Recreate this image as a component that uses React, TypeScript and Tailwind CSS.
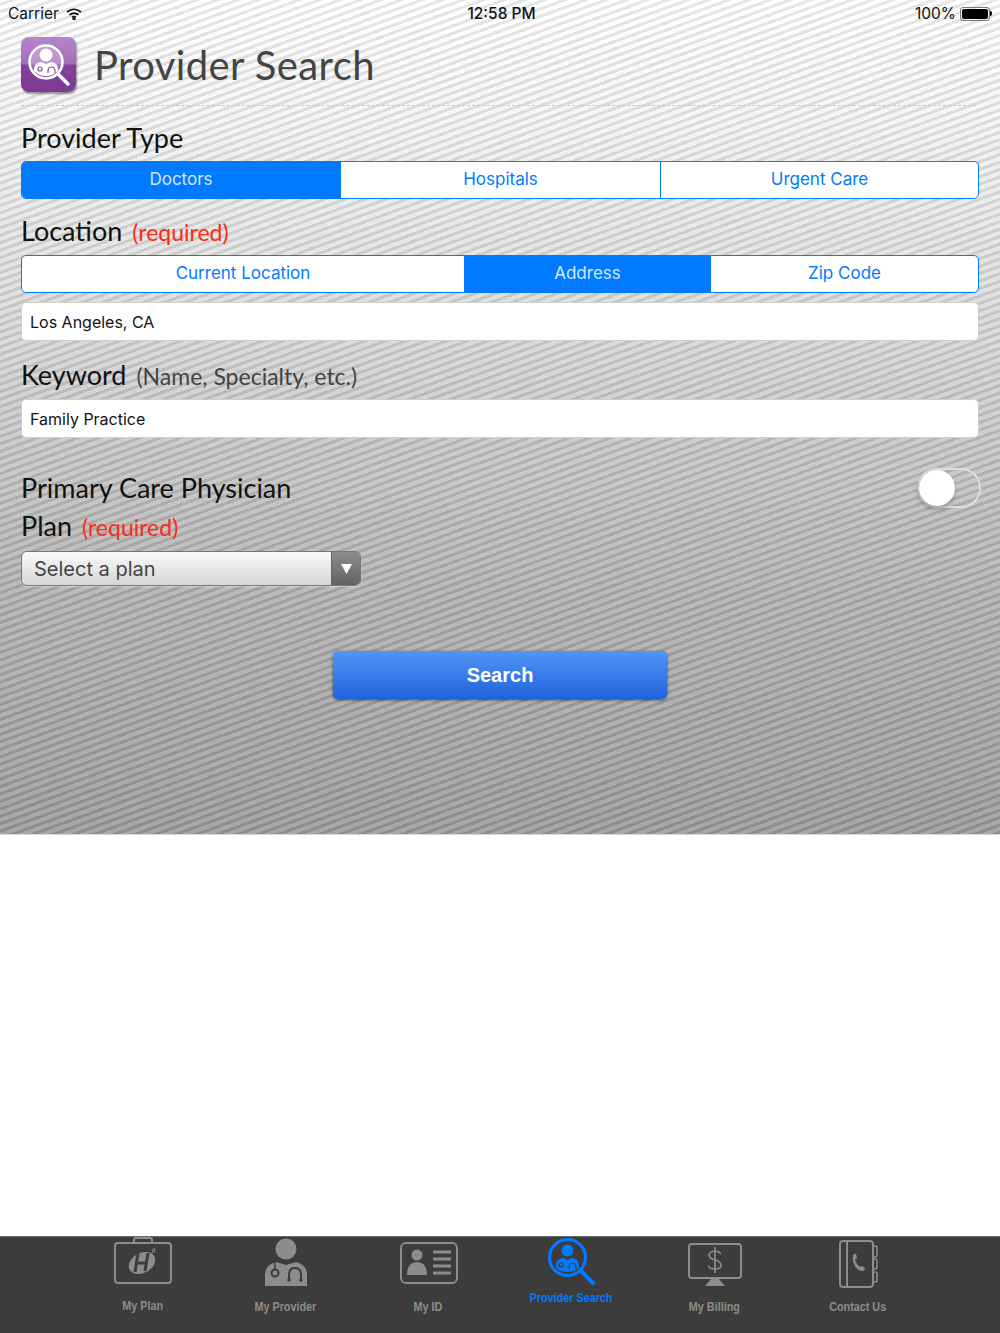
import { ReactNode } from 'react'

const lato = "font-['Lato','Noto_Sans',sans-serif]"

function Segmented({ items, active, cols }: { items: string[]; active: number; cols: string }) {
  return (
    <div className={`grid ${cols} h-[38px] rounded-[5px] border border-[#007aff] overflow-hidden bg-white`}>
      {items.map((item, i) => (
        <div
          key={item}
          className={`flex items-center justify-center text-[17px] ${i > 0 ? 'border-l border-[#007aff]' : ''} ${
            i === active ? 'bg-[#007aff] text-[#d5e8ff]' : 'text-[#007aff]'
          }`}
        >
          {item}
        </div>
      ))}
    </div>
  )
}

function Label({ title, note, red }: { title: string; note: string; red?: boolean }) {
  return (
    <div className={`flex items-baseline gap-[10px] ${lato}`}>
      <span className="text-[27px] leading-[34px] text-[#111]">{title}</span>
      <span className={`text-[23px] leading-[34px] ${red ? 'text-[#ff2a12]' : 'text-[#444]'}`}>{note}</span>
    </div>
  )
}

function TextBox({ value }: { value: string }) {
  return (
    <div className="h-[39px] rounded-[5px] border border-[#cfcfcf] bg-white pl-[8px] flex items-center text-[16px] text-[#111]">
      {value}
    </div>
  )
}

function PlanIcon() {
  return (
    <svg width="60" height="50" viewBox="0 0 60 50" fill="none" stroke="#8c8c8c" strokeWidth="2">
      <path d="M21 7V4q0-2 2-2h14q2 0 2 2v3" />
      <rect x="2" y="7" width="56" height="40" rx="3" />
      <ellipse cx="29" cy="27" rx="14" ry="10" transform="rotate(-28 29 27)" fill="#8c8c8c" stroke="none" />
      <path d="M25 18l-3 18M35 17l-3 18M23 27h11" stroke="#3c3c3c" strokeWidth="3" />
      <path d="M39 17l1-4q2-1 2 1l-1 3" strokeWidth="1" />
    </svg>
  )
}

function DoctorIcon() {
  return (
    <svg width="44" height="50" viewBox="0 0 44 50" fill="none">
      <circle cx="22" cy="12" r="10.5" fill="#8c8c8c" />
      <path d="M1 49V38q0-10 11-13l10 3 10-3q11 3 11 13v11z" fill="#8c8c8c" />
      <path d="M11 25v7" stroke="#3c3c3c" strokeWidth="1.5" />
      <circle cx="11" cy="36" r="3.5" stroke="#3c3c3c" strokeWidth="2" />
      <path d="M25 43v-5q0-7 6-7t6 7v5" stroke="#3c3c3c" strokeWidth="2" />
      <circle cx="25" cy="43" r="1.8" fill="#3c3c3c" />
      <circle cx="37" cy="43" r="1.8" fill="#3c3c3c" />
    </svg>
  )
}

function IdIcon() {
  return (
    <svg width="58" height="42" viewBox="0 0 58 42" fill="none">
      <rect x="1" y="1" width="56" height="40" rx="5" stroke="#8c8c8c" strokeWidth="2" />
      <circle cx="17" cy="13" r="5.5" fill="#8c8c8c" />
      <path d="M7 33q0-13 10-13t10 13z" fill="#8c8c8c" />
      <path d="M33 10h18M33 17h18M33 24h18M33 31h18" stroke="#8c8c8c" strokeWidth="3" />
    </svg>
  )
}

function SearchDoctorIcon() {
  return (
    <svg width="48" height="48" viewBox="0 0 48 48" fill="none">
      <circle cx="19.5" cy="19.5" r="18" stroke="#007aff" strokeWidth="3.2" />
      <path d="M33 33l12 12" stroke="#007aff" strokeWidth="4" strokeLinecap="round" />
      <circle cx="19.5" cy="12.5" r="6" fill="#007aff" />
      <path d="M8 30v-3q0-6 7-7l4.500 2 4.500-2q7 1 7 7v3q-5 4-11.500 4T8 30z" fill="#007aff" />
      <circle cx="13" cy="27" r="2" stroke="#3c3c3c" strokeWidth="1.200" />
      <path d="M21 31v-2q0-4 3.500-4t3.500 4v2" stroke="#3c3c3c" strokeWidth="1.200" />
    </svg>
  )
}

function BillingIcon() {
  return (
    <svg width="54" height="44" viewBox="0 0 54 44" fill="none">
      <rect x="1" y="1" width="52" height="34" rx="3" stroke="#8c8c8c" strokeWidth="2" />
      <path d="M17 43l6-7h8l6 7z" fill="#8c8c8c" />
      <path d="M33 11q-2-3-6-3t-6 3.500q0 4 6 5.500t6 5.500q0 3.500-6 3.500t-6.500-3.500M27 4v26" stroke="#8c8c8c" strokeWidth="1.700" />
    </svg>
  )
}

function ContactIcon() {
  return (
    <svg width="40" height="48" viewBox="0 0 40 48" fill="none" stroke="#8c8c8c" strokeWidth="2">
      <rect x="2" y="1" width="33" height="46" rx="3" />
      <path d="M9 1v46" />
      <path d="M35 6h2q2 0 2 2v7q0 2-2 2h-2M35 19h2q2 0 2 2v6q0 2-2 2h-2M35 32h2q2 0 2 2v6q0 2-2 2h-2" strokeWidth="1.500" />
      <path
        d="M15 15q2-2 3-1l1 4-2 2q1 4 5 7l2-1 3 2q0 3-3 3-4 0-7-5-3-5-2-11z"
        fill="#8c8c8c"
        stroke="none"
      />
    </svg>
  )
}

function Tab({ icon, label, active, top }: { icon: ReactNode; label: string; active?: boolean; top: string }) {
  return (
    <div className="flex flex-col items-center">
      <div className={`h-[52px] flex items-start justify-center ${top}`}>{icon}</div>
      <div
        className={`text-center text-[12px] leading-[13px] font-bold scale-x-[0.9] font-['Liberation_Sans',sans-serif] ${
          active ? 'text-[#007aff] mt-[3px]' : 'text-[#8c8c8c] mt-[12px]'
        }`}
      >
        {label}
      </div>
    </div>
  )
}

export default function App() {
  return (
    <div className="w-[1000px] h-[1333px] flex flex-col bg-white font-['Inter','Roboto',sans-serif] overflow-hidden">
      {/* Main panel */}
      <div className="relative h-[835px] border-b border-[#d8d8d8] bg-[linear-gradient(180deg,#ffffff_0%,#f3f3f3_15%,#d8d8d8_40%,#b4b4b4_70%,#9d9d9d_100%)]">
        <div className="absolute inset-0 opacity-[0.1] bg-[repeating-linear-gradient(-20deg,#000_0px,#000_3px,#fff_3px,#fff_7px)]" />
        <div className="relative">
          {/* Status bar */}
          <div className="h-[27px] px-[8px] grid grid-cols-3 items-center text-[15.500px] text-[#111]">
            <div className="flex items-center gap-[7px]">
              <span>Carrier</span>
              <svg width="16" height="12" viewBox="0 0 16 12" fill="none" stroke="#111" strokeWidth="1.700">
                <path d="M1 4q7-5.500 14 0M3.500 6.800q4.500-3.500 9 0M6 9.300q2-1.500 4 0" />
                <circle cx="8" cy="10.800" r="0.800" fill="#111" />
              </svg>
            </div>
            <div className="text-center font-medium ml-[3px]">12:58 PM</div>
            <div className="flex items-center justify-end gap-[4px]">
              <span>100%</span>
              <div className="flex items-center">
                <div className="w-[30px] h-[14px] rounded-[3px] border border-[#777] p-[1px]">
                  <div className="w-full h-full rounded-[2px] bg-black" />
                </div>
                <div className="w-[2px] h-[5px] rounded-r-[2px] bg-black" />
              </div>
            </div>
          </div>

          <div className="px-[21px]">
            {/* Header */}
            <div className="flex items-center gap-[18px] h-[79px] border-b border-dashed border-[#c8c8c8] mr-[3px]">
              <div className="w-[55px] h-[55px] -mt-[3px] rounded-[8px] bg-[linear-gradient(180deg,#b586c9_0%,#a46fbb_48%,#843f9a_52%,#7c3a92_100%)] shadow-[1px_2px_2px_rgba(0,0,0,0.4)] flex items-center justify-center">
                <svg width="46" height="46" viewBox="0 0 46 46" fill="none">
                  <circle cx="20" cy="20" r="16.500" fill="#ffffff" fillOpacity="0.25" stroke="#fff" strokeWidth="2.500" />
                  <path d="M32 32l10 10" stroke="#fff" strokeWidth="3.500" strokeLinecap="round" />
                  <circle cx="20" cy="13" r="6.500" fill="#fff" />
                  <path d="M8 29v-2q0-6 7-7l5 2 5-2q7 1 7 7v2q-5 5-12 5T8 29z" fill="#fff" />
                  <circle cx="14" cy="27" r="2" stroke="#8a4a9f" strokeWidth="1.200" />
                  <path d="M22 31v-2q0-4 3.500-4t3.500 4v2" stroke="#8a4a9f" strokeWidth="1.200" />
                </svg>
              </div>
              <h1 className={`text-[40px] leading-none text-[#444] tracking-[0.4px] -mt-[3px] ${lato}`}>Provider Search</h1>
            </div>

            {/* Provider type */}
            <div className={`mt-[15px] text-[27px] leading-[34px] text-[#111] ${lato}`}>Provider Type</div>
            <div className="mt-[6px]">
              <Segmented items={['Doctors', 'Hospitals', 'Urgent Care']} active={0} cols="grid-cols-[318px_320px_1fr]" />
            </div>

            {/* Location */}
            <div className="mt-[15px]">
              <Label title="Location" note="(required)" red />
            </div>
            <div className="mt-[6px]">
              <Segmented items={['Current Location', 'Address', 'Zip Code']} active={1} cols="grid-cols-[442px_246px_1fr]" />
            </div>
            <div className="mt-[9px]">
              <TextBox value="Los Angeles, CA" />
            </div>

            {/* Keyword */}
            <div className="mt-[17px]">
              <Label title="Keyword" note="(Name, Specialty, etc.)" />
            </div>
            <div className="mt-[6px]">
              <TextBox value="Family Practice" />
            </div>

            {/* PCP */}
            <div className="mt-[30px] h-[40px] flex items-center justify-between">
              <span className={`text-[27px] text-[#111] ${lato}`}>Primary Care Physician</span>
              <div className="w-[64px] h-[40px] -mr-[2px] rounded-full border-2 border-[#dedede] shadow-[inset_0_0_1px_rgba(0,0,0,0.2)]">
                <div className="w-[36px] h-[36px] rounded-full bg-white shadow-[-1px_3px_5px_rgba(0,0,0,0.3)]" />
              </div>
            </div>

            {/* Plan */}
            <div className="mt-[1px]">
              <Label title="Plan" note="(required)" red />
            </div>
            <div className="mt-[7px] w-[340px] h-[35px] rounded-[6px] border border-[#777] overflow-hidden flex shadow-[0_1px_1px_rgba(255,255,255,0.4)]">
              <div className="flex-1 pl-[12px] flex items-center text-[20px] text-[#444] bg-[linear-gradient(180deg,#fafafa,#d6d6d6)]">
                Select a plan
              </div>
              <div className="w-[29px] flex items-center justify-center border-l border-[#666] bg-[linear-gradient(180deg,#8c8c8c,#626262)]">
                <svg width="11" height="10" viewBox="0 0 11 10">
                  <path d="M0 0h11L5.500 10z" fill="#fff" />
                </svg>
              </div>
            </div>

            {/* Search */}
            <div className="mt-[65px] flex justify-center">
              <button className="w-[334px] h-[48px] rounded-[5px] bg-[linear-gradient(180deg,#4f96f7,#2062dd)] text-white text-[20px] font-bold font-['Liberation_Sans',sans-serif] shadow-[0_1px_3px_rgba(0,0,0,0.6)]">
                Search
              </button>
            </div>
          </div>
        </div>
      </div>

      <div className="flex-1" />

      {/* Tab bar */}
      <div className="h-[97px] bg-[#3c3c3c] border-t border-[#6a6a6a] px-[71px] grid grid-cols-6">
        <Tab icon={<PlanIcon />} label="My Plan" top="-mt-[1px]" />
        <Tab icon={<DoctorIcon />} label="My Provider" top="" />
        <Tab icon={<IdIcon />} label="My ID" top="pt-[5px]" />
        <Tab icon={<SearchDoctorIcon />} label="Provider Search" active top="pt-[1px]" />
        <Tab icon={<BillingIcon />} label="My Billing" top="pt-[6px]" />
        <Tab icon={<ContactIcon />} label="Contact Us" top="pt-[3px]" />
      </div>
    </div>
  )
}
